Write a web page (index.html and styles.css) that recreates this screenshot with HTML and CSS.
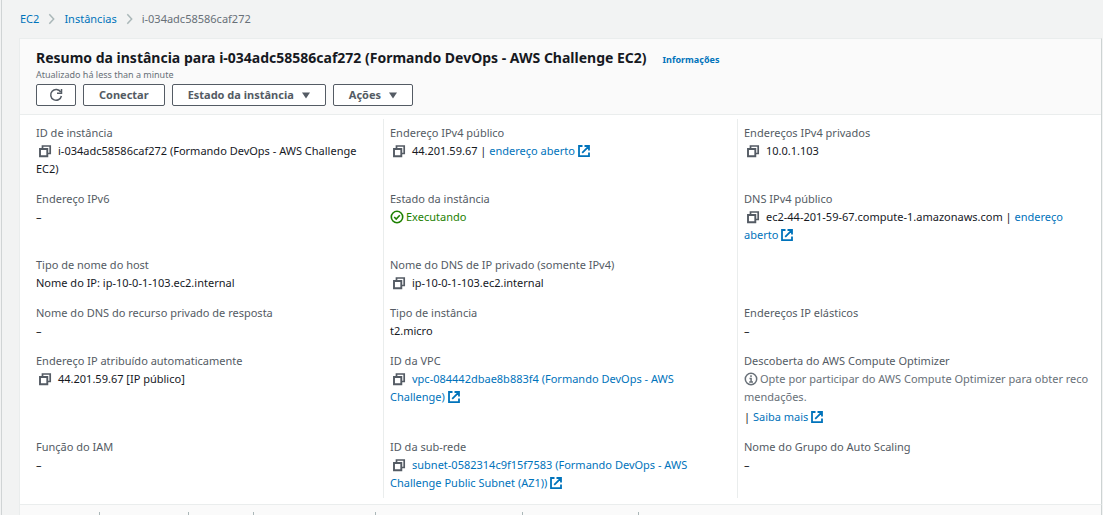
FILE: index.html
```html
<!DOCTYPE html>
<html lang="pt-BR">
<head>
<meta charset="utf-8">
<title>Resumo da instância</title>
<link rel="stylesheet" href="styles.css">
</head>
<body>
<svg class="sprite" aria-hidden="true">
  <symbol id="copy" viewBox="0 0 14 14"><path d="M4.500 4V2h7.700v7.500H10" fill="none" stroke="currentColor" stroke-width="1.700"/><path d="M2 5h7.300v7.200H2z" fill="none" stroke="currentColor" stroke-width="1.900"/></symbol>
  <symbol id="external" viewBox="0 0 14 14"><path d="M5.500 2H2v10.200h10V8.500M7.500 2H12v4.500M11.700 2.300L5.200 8.800" fill="none" stroke="currentColor" stroke-width="1.800"/></symbol>
  <symbol id="check" viewBox="0 0 14 14"><circle cx="7" cy="7" r="5.700" fill="none" stroke="currentColor" stroke-width="1.600"/><path d="M4.200 7l2 2 3.600-3.800" fill="none" stroke="currentColor" stroke-width="1.600"/></symbol>
  <symbol id="info" viewBox="0 0 14 14"><circle cx="7" cy="7" r="5.700" fill="none" stroke="currentColor" stroke-width="1.500"/><path d="M7 3.300v1.600M5.500 6.500h1.600v3.300M5.200 10h3.800" fill="none" stroke="currentColor" stroke-width="1.500"/></symbol>
  <symbol id="chevron" viewBox="0 0 8 12"><path d="M1.500 .7L6.500 6l-5 5.300" fill="none" stroke="currentColor" stroke-width="1.700"/></symbol>
  <symbol id="caret" viewBox="0 0 8 7"><path d="M0 .5h8L4 6.500z" fill="currentColor"/></symbol>
  <symbol id="refresh" viewBox="0 0 14 14"><path d="M11.700 4A5.400 5.400 0 1 0 12.400 8" fill="none" stroke="currentColor" stroke-width="1.500"/><path d="M12.500 1v4.300H8" fill="none" stroke="currentColor" stroke-width="1.500"/></symbol>
</svg>
<main class="page">
  <nav class="breadcrumb" aria-label="Trilha">
    <a href="#">EC2</a>
    <svg class="chevron"><use href="#chevron"/></svg>
    <a href="#">Instâncias</a>
    <svg class="chevron"><use href="#chevron"/></svg>
    <span>i-034adc58586caf272</span>
  </nav>
  <section class="panel">
    <header class="panel-header">
      <div class="title-row">
        <h1>Resumo da instância para i-034adc58586caf272 (Formando DevOps - AWS Challenge EC2)</h1>
        <a class="info-link" href="#">Informações</a>
      </div>
      <p class="updated">Atualizado há less than a minute</p>
      <div class="actions">
        <button type="button" class="btn btn-icon" aria-label="Atualizar"><svg class="icon"><use href="#refresh"/></svg></button>
        <button type="button" class="btn">Conectar</button>
        <button type="button" class="btn">Estado da instância <svg class="caret"><use href="#caret"/></svg></button>
        <button type="button" class="btn">Ações <svg class="caret"><use href="#caret"/></svg></button>
      </div>
    </header>
    <div class="details">
      <dl class="column">
        <div><dt>ID de instância</dt><dd><button type="button" class="copy" aria-label="Copiar"><svg class="icon"><use href="#copy"/></svg></button>i-034adc58586caf272 (Formando DevOps - AWS Challenge EC2)</dd></div>
        <div><dt>Endereço IPv6</dt><dd>–</dd></div>
        <div><dt>Tipo de nome do host</dt><dd>Nome do IP: ip-10-0-1-103.ec2.internal</dd></div>
        <div><dt>Nome do DNS do recurso privado de resposta</dt><dd>–</dd></div>
        <div><dt>Endereço IP atribuído automaticamente</dt><dd><button type="button" class="copy" aria-label="Copiar"><svg class="icon"><use href="#copy"/></svg></button>44.201.59.67 [IP público]</dd></div>
        <div><dt>Função do IAM</dt><dd>–</dd></div>
      </dl>
      <dl class="column">
        <div><dt>Endereço IPv4 público</dt><dd><button type="button" class="copy" aria-label="Copiar"><svg class="icon"><use href="#copy"/></svg></button>44.201.59.67 | <a href="#">endereço aberto<svg class="icon external"><use href="#external"/></svg></a></dd></div>
        <div><dt>Estado da instância</dt><dd class="running"><svg class="icon status"><use href="#check"/></svg>Executando</dd></div>
        <div><dt>Nome do DNS de IP privado (somente IPv4)</dt><dd><button type="button" class="copy" aria-label="Copiar"><svg class="icon"><use href="#copy"/></svg></button>ip-10-0-1-103.ec2.internal</dd></div>
        <div><dt>Tipo de instância</dt><dd>t2.micro</dd></div>
        <div><dt>ID da VPC</dt><dd><button type="button" class="copy" aria-label="Copiar"><svg class="icon"><use href="#copy"/></svg></button><a href="#">vpc-084442dbae8b883f4 (Formando DevOps - AWS Challenge)<svg class="icon external"><use href="#external"/></svg></a></dd></div>
        <div><dt>ID da sub-rede</dt><dd><button type="button" class="copy" aria-label="Copiar"><svg class="icon"><use href="#copy"/></svg></button><a href="#">subnet-0582314c9f15f7583 (Formando DevOps - AWS Challenge Public Subnet (AZ1))<svg class="icon external"><use href="#external"/></svg></a></dd></div>
      </dl>
      <dl class="column">
        <div><dt>Endereços IPv4 privados</dt><dd><button type="button" class="copy" aria-label="Copiar"><svg class="icon"><use href="#copy"/></svg></button>10.0.1.103</dd></div>
        <div><dt>DNS IPv4 público</dt><dd><button type="button" class="copy" aria-label="Copiar"><svg class="icon"><use href="#copy"/></svg></button>ec2-44-201-59-67.compute-1.amazonaws.com | <a href="#">endereço aberto<svg class="icon external"><use href="#external"/></svg></a></dd></div>
        <div class="blank"></div>
        <div><dt>Endereços IP elásticos</dt><dd>–</dd></div>
        <div><dt>Descoberta do AWS Compute Optimizer</dt><dd class="hint"><svg class="icon status"><use href="#info"/></svg>Opte por participar do AWS Compute Optimizer para obter recomendações.</dd><dd class="more">| <a href="#">Saiba mais<svg class="icon external"><use href="#external"/></svg></a></dd></div>
        <div><dt>Nome do Grupo do Auto Scaling</dt><dd>–</dd></div>
      </dl>
    </div>
  </section>
  <div class="tabs">
    <span class="tab"></span><span class="tab"></span><span class="tab"></span><span class="tab"></span><span class="tab"></span><span class="tab"></span>
  </div>
</main>
</body>
</html>
```
FILE: styles.css
```css
* { box-sizing: border-box; }
html { background: #f2f3f3; }
body {
  margin: 0;
  font: 11px/18px "Noto Sans", "Open Sans", sans-serif;
  color: #16191f;
}
.sprite { position: absolute; width: 0; height: 0; }
a { color: #0073bb; text-decoration: none; }
h1, p, dl, dd { margin: 0; }
.page {
  display: flex;
  flex-direction: column;
  min-height: 100vh;
  margin-left: 1px;
  padding: 0 1px 0 17px;
  border-left: 1px solid #d0d4d5;
}
.breadcrumb {
  display: flex;
  align-items: center;
  gap: 9px;
  height: 38px;
  padding-left: 1px;
  color: #687078;
}
.chevron { width: 7px; height: 12px; color: #aab7b8; }
.panel {
  background: #fff;
  border: 1px solid #eaeded;
  border-right-color: #cdd3d3;
  border-bottom: 0;
}
.panel-header {
  padding: 9px 16px 8px;
  background: #fafafa;
  border-bottom: 1px solid #eaeded;
}
.title-row { display: flex; align-items: baseline; gap: 16px; }
h1 { font-size: 14px; line-height: 20px; font-weight: 700; }
.info-link { font-size: 9px; font-weight: 700; }
.updated { font-size: 9px; line-height: 12px; color: #687078; }
.actions { display: flex; gap: 7px; margin-top: 3px; }
.btn {
  display: flex;
  align-items: center;
  gap: 8px;
  height: 22px;
  padding: 0 15px;
  font: 700 11px/18px "Noto Sans", "Open Sans", sans-serif;
  color: #545b64;
  background: #fff;
  border: 1px solid #545b64;
  border-radius: 2px;
}
.btn-icon { padding: 0 12px; }
.caret { width: 8px; height: 7px; }
.icon { width: 14px; height: 14px; vertical-align: -3px; }
.external { margin-left: 2px; }
.details {
  display: grid;
  grid-template-columns: repeat(3, minmax(0, 1fr));
  grid-template-rows: repeat(6, auto);
  row-gap: 12px;
  padding: 4px 10px 6px 9px;
}
.column {
  display: grid;
  grid-row: span 6;
  grid-template-rows: subgrid;
  padding: 5px 16px 6px 6px;
  border-left: 1px solid #eaeded;
}
.column:first-child { border-left-color: transparent; }
dt { color: #545b64; }
.copy {
  padding: 0;
  margin: 0 6px 0 2px;
  font: inherit;
  line-height: 14px;
  color: #545b64;
  background: none;
  border: 0;
}
.status { margin-right: 2px; }
.running { color: #1d8102; }
.hint { color: #687078; margin-right: -16px; word-break: break-all; }
.more { margin-top: 2px; }
.tabs {
  display: flex;
  flex: 1;
  padding-top: 7px;
  background: #fafafa;
  border: 1px solid #eaeded;
  border-right-color: #cdd3d3;
  border-bottom: 0;
}
.tab { border-right: 1px solid #aab7b8; }
.tab:nth-child(1) { width: 80px; }
.tab:nth-child(2) { width: 89px; }
.tab:nth-child(3) { width: 65px; }
.tab:nth-child(4) { width: 122px; }
.tab:nth-child(5) { width: 147px; }
.tab:nth-child(6) { width: 116px; }
```
